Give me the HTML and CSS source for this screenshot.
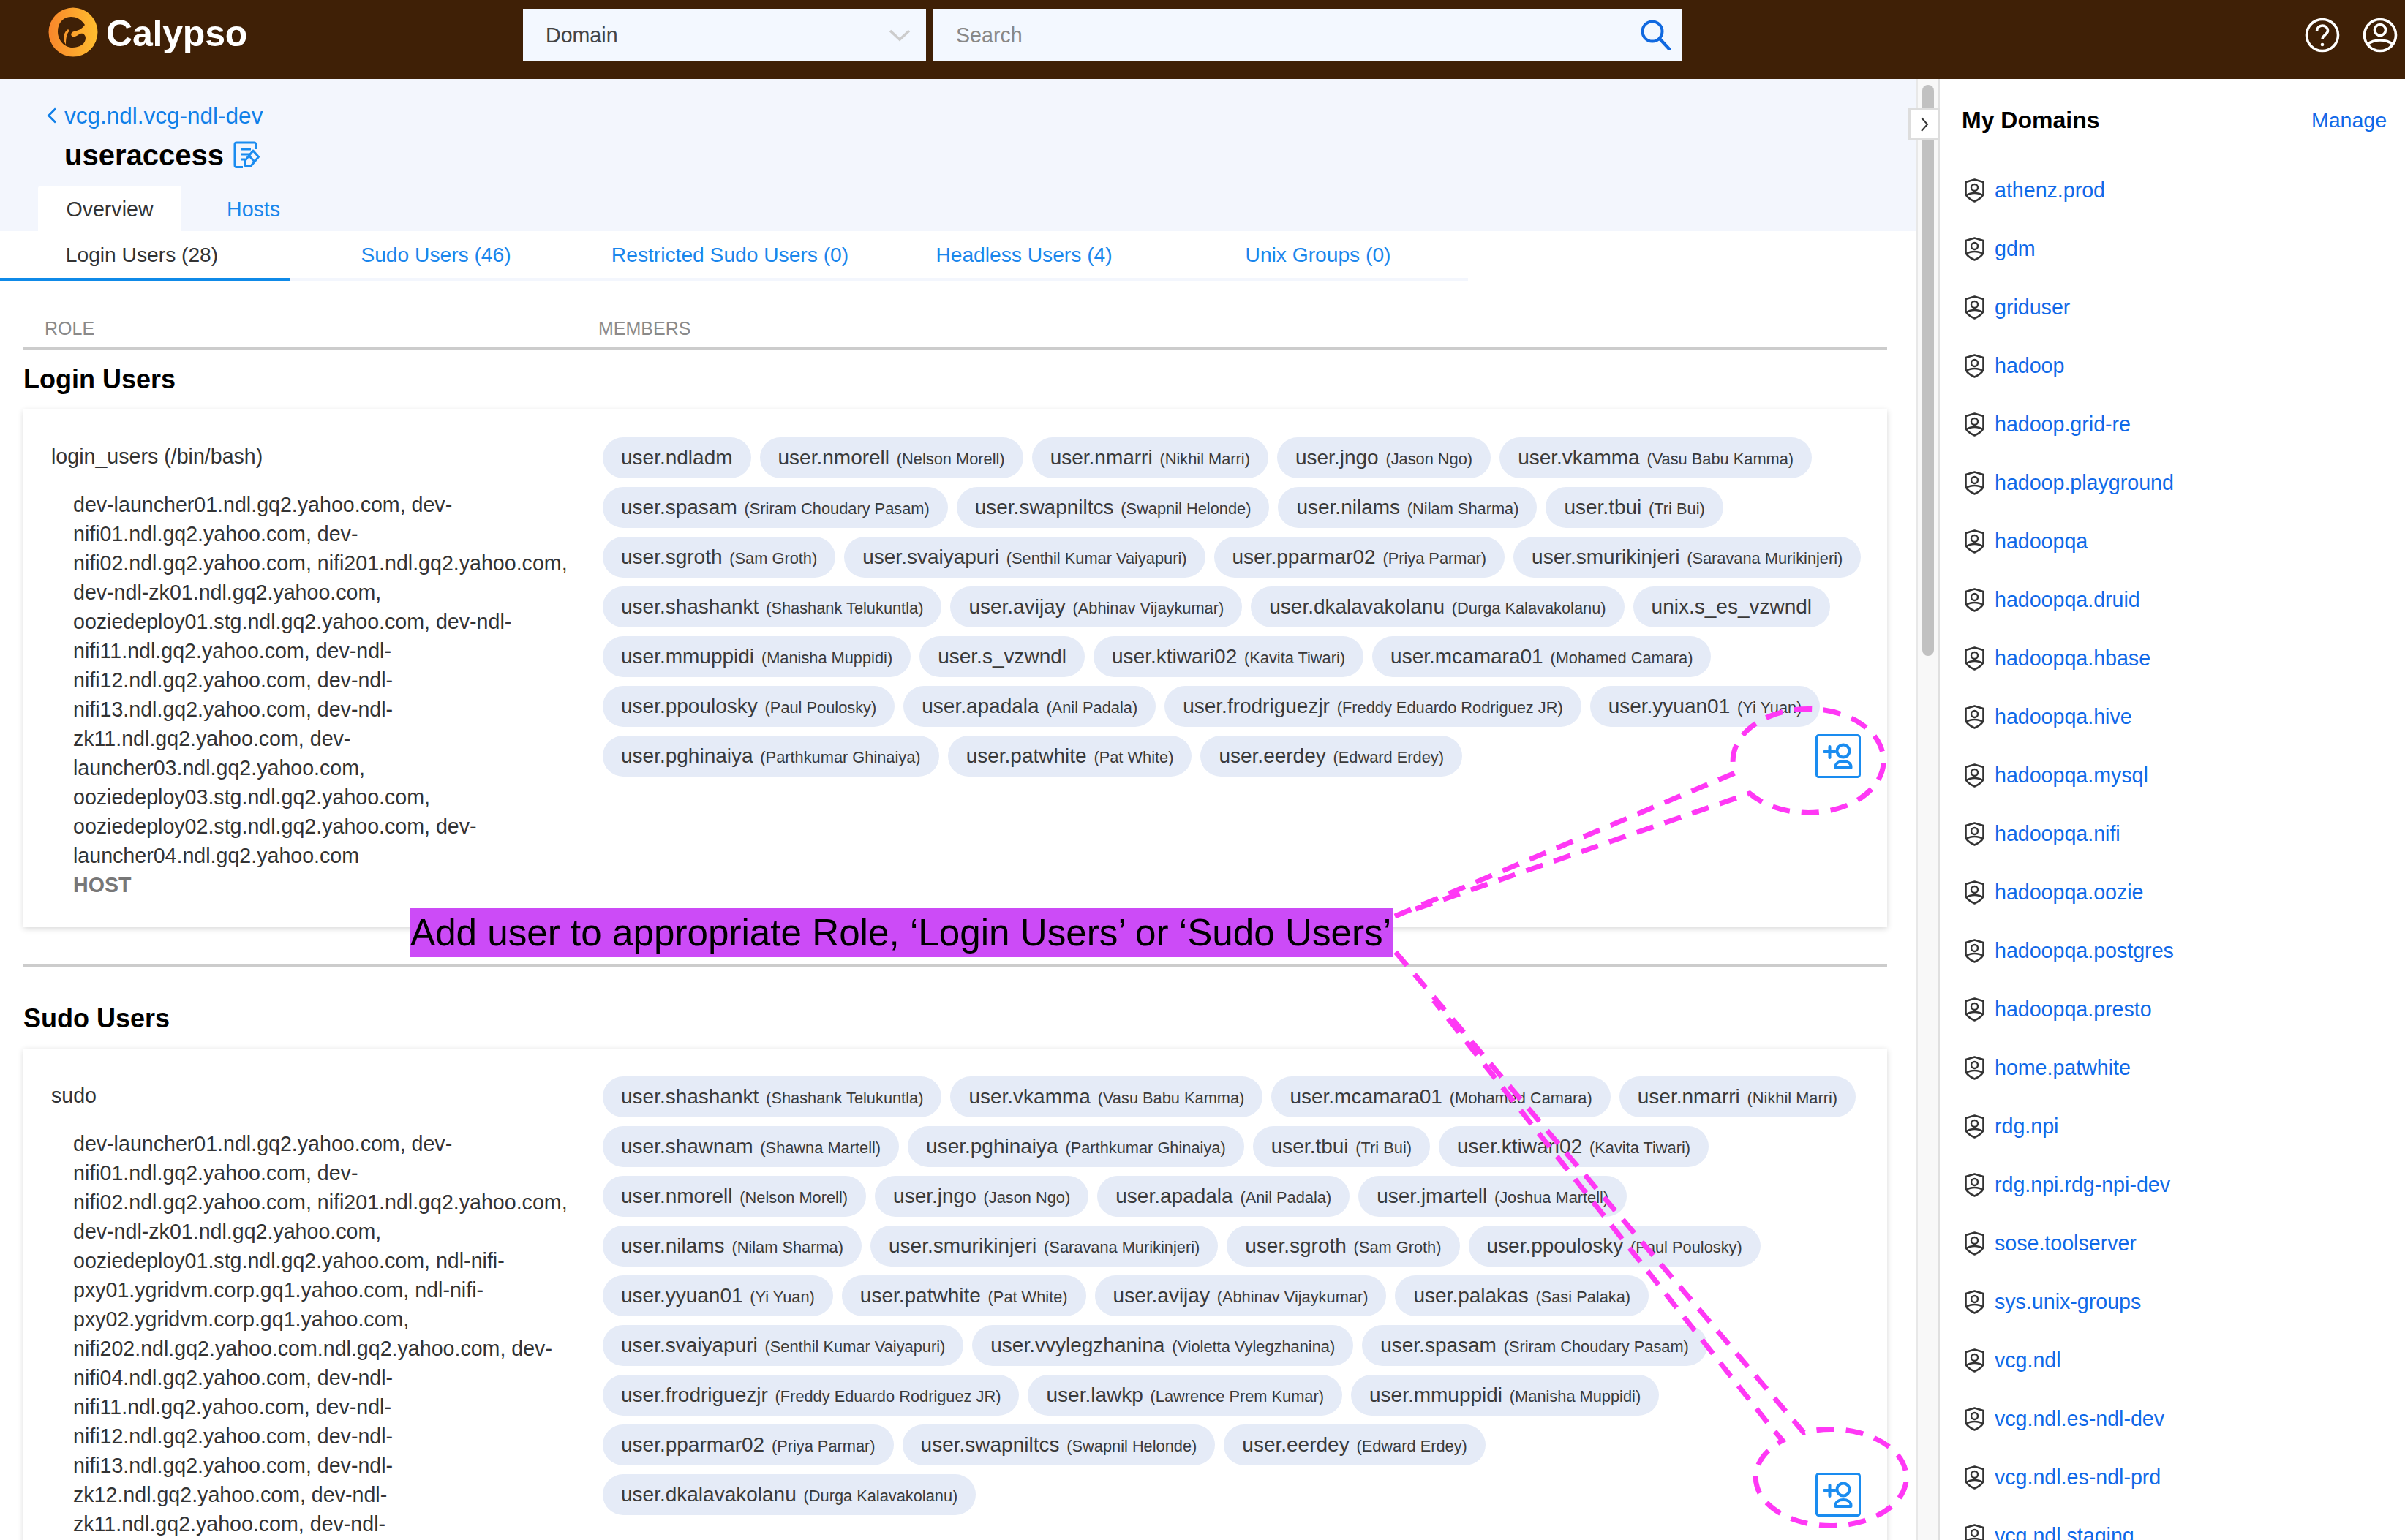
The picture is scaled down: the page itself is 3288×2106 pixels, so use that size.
FILE: index.html
```html
<!DOCTYPE html>
<html lang="en">
<head>
    <meta charset="UTF-8">
    <title>Calypso - useraccess</title>
    <link rel="stylesheet" href="styles.css">
</head>
<body>

<svg width="0" height="0" class="icon-defs">
    <symbol id="add-user" viewBox="0 0 62 60">
        <rect x="1.5" y="1.5" width="59" height="57" rx="3" fill="none" stroke="currentColor" stroke-width="3"/>
        <path d="M12 24h15M19.500 17v15" fill="none" stroke="currentColor" stroke-width="4" stroke-linecap="round"/>
        <circle cx="38" cy="23" r="8.500" fill="none" stroke="currentColor" stroke-width="4"/>
        <path d="M27.500 44.500c0-5 5-7.500 10.500-7.500s10.500 2.500 10.500 7.500v1.500h-21z" fill="none" stroke="currentColor" stroke-width="4" stroke-linejoin="round"/>
    </symbol>
    <symbol id="shield" viewBox="0 0 27 33">
        <path d="M13.500 1.500 25.500 5v16c0 3-6 8-12 10.500C7.500 29 1.500 24 1.500 21V5z" fill="none" stroke="#333" stroke-width="2.600" stroke-linejoin="round"/>
        <circle cx="13.500" cy="12.500" r="4.500" fill="none" stroke="#333" stroke-width="2.400"/>
        <path d="M2.500 23c6-4 16-4 22 0" fill="none" stroke="#333" stroke-width="2.400"/>
    </symbol>
</svg>

<header class="topbar">
    <div class="logo">
        <svg class="logo-mark" viewBox="0 0 68 68">
            <defs>
                <linearGradient id="logo-fill" x1="0" y1="0" x2="1" y2="0">
                    <stop offset="0" stop-color="#f8862b"/>
                    <stop offset="1" stop-color="#ffbe2f"/>
                </linearGradient>
            </defs>
            <circle cx="34" cy="34" r="33.500" fill="url(#logo-fill)"/>
            <path d="M50 24C45 16 38 13 31 13 20 13 13 22 13 33c0 12 9 22 20 22 10 0 18-5 18-13 0-5-5-8-9-5-3 2-6 4-9 3-3-2-2-6 2-7 5-1 11-3 15-9z" fill="#3f2006"/>
            <path d="M27 30c-6 4-8 13-3 21 0-8 1-15 5-19z" fill="#f99a2c"/>
        </svg>
        <span class="logo-text">Calypso</span>
    </div>
    <div class="domain-select">
        <span>Domain</span>
        <svg class="select-caret" viewBox="0 0 30 18"><path d="M2 3l13 12L28 3" fill="none" stroke="#ccc" stroke-width="3.500"/></svg>
    </div>
    <div class="search-box">
        <span>Search</span>
        <svg class="search-icon" viewBox="0 0 42 42"><circle cx="16" cy="16" r="13.500" fill="none" stroke="#1069e0" stroke-width="4"/><path d="M26 26l14 15" stroke="#1069e0" stroke-width="4.500" stroke-linecap="round"/></svg>
    </div>
    <div class="user-icons">
        <svg class="round-icon" viewBox="0 0 48 48">
            <circle cx="24" cy="24" r="21.500" fill="none" stroke="#fff" stroke-width="3.600"/>
            <path d="M16.500 18.500c0-4.500 3.500-7.500 7.500-7.500s7.500 3 7.500 7c0 5-7.500 6-7.500 12" fill="none" stroke="#fff" stroke-width="3.600"/>
            <circle cx="24" cy="37" r="2.300" fill="#fff"/>
        </svg>
        <svg class="round-icon" viewBox="0 0 48 48">
            <circle cx="24" cy="24" r="21.500" fill="none" stroke="#fff" stroke-width="3.600"/>
            <circle cx="24" cy="17" r="7.500" fill="none" stroke="#fff" stroke-width="3.600"/>
            <path d="M6 37c10-8 26-8 36 0" fill="none" stroke="#fff" stroke-width="3.600"/>
        </svg>
    </div>
</header>

<div class="workspace">
    <main class="content">
        <div class="page-head">
            <a class="crumb">
                <svg class="crumb-arrow" viewBox="0 0 14 22"><path d="M12 1.500L2.500 11l9.500 9.500" fill="none" stroke="#0f7fe8" stroke-width="2.800"/></svg>
                vcg.ndl.vcg-ndl-dev
            </a>
            <h1 class="service-title">
                useraccess
                <svg class="title-icon" viewBox="0 0 36 38">
                    <path d="M13 35.500H4.500a2.500 2.500 0 0 1-2.500-2.500V4.500A2.500 2.500 0 0 1 4.500 2h24A2.500 2.500 0 0 1 31 4.500V11" fill="none" stroke="#1a8cf0" stroke-width="3"/>
                    <path d="M10 11h14M10 18h14M10 25h6" fill="none" stroke="#1a8cf0" stroke-width="3"/>
                    <path d="M27 13l7.500 8.500L24 34H16.500v-8z M21 19.500l7.500 8" fill="none" stroke="#1a8cf0" stroke-width="3" stroke-linejoin="round"/>
                </svg>
            </h1>
            <div class="page-tabs">
                <a class="page-tab active">Overview</a>
                <a class="page-tab">Hosts</a>
            </div>
        </div>

        <nav class="user-tabs">
            <a class="user-tab active">Login Users (28)</a>
            <a class="user-tab">Sudo Users (46)</a>
            <a class="user-tab">Restricted Sudo Users (0)</a>
            <a class="user-tab">Headless Users (4)</a>
            <a class="user-tab">Unix Groups (0)</a>
        </nav>

        <div class="table-area">
            <div class="table-head">
                <span class="col-role">ROLE</span>
                <span>MEMBERS</span>
            </div>

            <h3 class="section-title">Login Users</h3>
            <section class="role-card">
                <div class="role-col">
                    <div class="role-name">login_users (/bin/bash)</div>
                    <div class="host-list">dev-launcher01.ndl.gq2.yahoo.com, dev-nifi01.ndl.gq2.yahoo.com, dev-nifi02.ndl.gq2.yahoo.com, nifi201.ndl.gq2.yahoo.com, dev-ndl-zk01.ndl.gq2.yahoo.com, ooziedeploy01.stg.ndl.gq2.yahoo.com, dev-ndl-nifi11.ndl.gq2.yahoo.com, dev-ndl-nifi12.ndl.gq2.yahoo.com, dev-ndl-nifi13.ndl.gq2.yahoo.com, dev-ndl-zk11.ndl.gq2.yahoo.com, dev-launcher03.ndl.gq2.yahoo.com, ooziedeploy03.stg.ndl.gq2.yahoo.com, ooziedeploy02.stg.ndl.gq2.yahoo.com, dev-launcher04.ndl.gq2.yahoo.com</div>
                    <div class="host-label">HOST</div>
                </div>
                <div class="chips">
                    <span class="chip">user.ndladm</span>
                    <span class="chip">user.nmorell <small>(Nelson Morell)</small></span>
                    <span class="chip">user.nmarri <small>(Nikhil Marri)</small></span>
                    <span class="chip">user.jngo <small>(Jason Ngo)</small></span>
                    <span class="chip">user.vkamma <small>(Vasu Babu Kamma)</small></span>
                    <span class="chip">user.spasam <small>(Sriram Choudary Pasam)</small></span>
                    <span class="chip">user.swapniltcs <small>(Swapnil Helonde)</small></span>
                    <span class="chip">user.nilams <small>(Nilam Sharma)</small></span>
                    <span class="chip">user.tbui <small>(Tri Bui)</small></span>
                    <span class="chip">user.sgroth <small>(Sam Groth)</small></span>
                    <span class="chip">user.svaiyapuri <small>(Senthil Kumar Vaiyapuri)</small></span>
                    <span class="chip">user.pparmar02 <small>(Priya Parmar)</small></span>
                    <span class="chip">user.smurikinjeri <small>(Saravana Murikinjeri)</small></span>
                    <span class="chip">user.shashankt <small>(Shashank Telukuntla)</small></span>
                    <span class="chip">user.avijay <small>(Abhinav Vijaykumar)</small></span>
                    <span class="chip">user.dkalavakolanu <small>(Durga Kalavakolanu)</small></span>
                    <span class="chip">unix.s_es_vzwndl</span>
                    <span class="chip">user.mmuppidi <small>(Manisha Muppidi)</small></span>
                    <span class="chip">user.s_vzwndl</span>
                    <span class="chip">user.ktiwari02 <small>(Kavita Tiwari)</small></span>
                    <span class="chip">user.mcamara01 <small>(Mohamed Camara)</small></span>
                    <span class="chip">user.ppoulosky <small>(Paul Poulosky)</small></span>
                    <span class="chip">user.apadala <small>(Anil Padala)</small></span>
                    <span class="chip">user.frodriguezjr <small>(Freddy Eduardo Rodriguez JR)</small></span>
                    <span class="chip">user.yyuan01 <small>(Yi Yuan)</small></span>
                    <span class="chip">user.pghinaiya <small>(Parthkumar Ghinaiya)</small></span>
                    <span class="chip">user.patwhite <small>(Pat White)</small></span>
                    <span class="chip">user.eerdey <small>(Edward Erdey)</small></span>
                    <svg class="add-btn"><use href="#add-user"/></svg>
                </div>
            </section>

            <div class="divider"></div>

            <h3 class="section-title sudo-title">Sudo Users</h3>
            <section class="role-card">
                <div class="role-col">
                    <div class="role-name">sudo</div>
                    <div class="host-list">dev-launcher01.ndl.gq2.yahoo.com, dev-nifi01.ndl.gq2.yahoo.com, dev-nifi02.ndl.gq2.yahoo.com, nifi201.ndl.gq2.yahoo.com, dev-ndl-zk01.ndl.gq2.yahoo.com, ooziedeploy01.stg.ndl.gq2.yahoo.com, ndl-nifi-pxy01.ygridvm.corp.gq1.yahoo.com, ndl-nifi-pxy02.ygridvm.corp.gq1.yahoo.com, nifi202.ndl.gq2.yahoo.com.ndl.gq2.yahoo.com, dev-nifi04.ndl.gq2.yahoo.com, dev-ndl-nifi11.ndl.gq2.yahoo.com, dev-ndl-nifi12.ndl.gq2.yahoo.com, dev-ndl-nifi13.ndl.gq2.yahoo.com, dev-ndl-zk12.ndl.gq2.yahoo.com, dev-ndl-zk11.ndl.gq2.yahoo.com, dev-ndl-</div>
                </div>
                <div class="chips">
                    <span class="chip">user.shashankt <small>(Shashank Telukuntla)</small></span>
                    <span class="chip">user.vkamma <small>(Vasu Babu Kamma)</small></span>
                    <span class="chip">user.mcamara01 <small>(Mohamed Camara)</small></span>
                    <span class="chip">user.nmarri <small>(Nikhil Marri)</small></span>
                    <span class="chip">user.shawnam <small>(Shawna Martell)</small></span>
                    <span class="chip">user.pghinaiya <small>(Parthkumar Ghinaiya)</small></span>
                    <span class="chip">user.tbui <small>(Tri Bui)</small></span>
                    <span class="chip">user.ktiwari02 <small>(Kavita Tiwari)</small></span>
                    <span class="chip">user.nmorell <small>(Nelson Morell)</small></span>
                    <span class="chip">user.jngo <small>(Jason Ngo)</small></span>
                    <span class="chip">user.apadala <small>(Anil Padala)</small></span>
                    <span class="chip">user.jmartell <small>(Joshua Martell)</small></span>
                    <span class="chip">user.nilams <small>(Nilam Sharma)</small></span>
                    <span class="chip">user.smurikinjeri <small>(Saravana Murikinjeri)</small></span>
                    <span class="chip">user.sgroth <small>(Sam Groth)</small></span>
                    <span class="chip">user.ppoulosky <small>(Paul Poulosky)</small></span>
                    <span class="chip">user.yyuan01 <small>(Yi Yuan)</small></span>
                    <span class="chip">user.patwhite <small>(Pat White)</small></span>
                    <span class="chip">user.avijay <small>(Abhinav Vijaykumar)</small></span>
                    <span class="chip">user.palakas <small>(Sasi Palaka)</small></span>
                    <span class="chip">user.svaiyapuri <small>(Senthil Kumar Vaiyapuri)</small></span>
                    <span class="chip">user.vvylegzhanina <small>(Violetta Vylegzhanina)</small></span>
                    <span class="chip">user.spasam <small>(Sriram Choudary Pasam)</small></span>
                    <span class="chip">user.frodriguezjr <small>(Freddy Eduardo Rodriguez JR)</small></span>
                    <span class="chip">user.lawkp <small>(Lawrence Prem Kumar)</small></span>
                    <span class="chip">user.mmuppidi <small>(Manisha Muppidi)</small></span>
                    <span class="chip">user.pparmar02 <small>(Priya Parmar)</small></span>
                    <span class="chip">user.swapniltcs <small>(Swapnil Helonde)</small></span>
                    <span class="chip">user.eerdey <small>(Edward Erdey)</small></span>
                    <span class="chip">user.dkalavakolanu <small>(Durga Kalavakolanu)</small></span>
                    <svg class="add-btn"><use href="#add-user"/></svg>
                </div>
            </section>
        </div>
    </main>

    <div class="scroll-track"><div class="scroll-thumb"></div></div>
    <button class="collapse-btn">
        <svg viewBox="0 0 14 24"><path d="M3 3l8 9-8 9" fill="none" stroke="#333" stroke-width="2"/></svg>
    </button>

    <aside class="domains">
        <div class="domains-head">
            <h2>My Domains</h2>
            <a class="manage">Manage</a>
        </div>
        <ul class="domain-list">
            <li><svg class="shield"><use href="#shield"/></svg><a>athenz.prod</a></li>
            <li><svg class="shield"><use href="#shield"/></svg><a>gdm</a></li>
            <li><svg class="shield"><use href="#shield"/></svg><a>griduser</a></li>
            <li><svg class="shield"><use href="#shield"/></svg><a>hadoop</a></li>
            <li><svg class="shield"><use href="#shield"/></svg><a>hadoop.grid-re</a></li>
            <li><svg class="shield"><use href="#shield"/></svg><a>hadoop.playground</a></li>
            <li><svg class="shield"><use href="#shield"/></svg><a>hadoopqa</a></li>
            <li><svg class="shield"><use href="#shield"/></svg><a>hadoopqa.druid</a></li>
            <li><svg class="shield"><use href="#shield"/></svg><a>hadoopqa.hbase</a></li>
            <li><svg class="shield"><use href="#shield"/></svg><a>hadoopqa.hive</a></li>
            <li><svg class="shield"><use href="#shield"/></svg><a>hadoopqa.mysql</a></li>
            <li><svg class="shield"><use href="#shield"/></svg><a>hadoopqa.nifi</a></li>
            <li><svg class="shield"><use href="#shield"/></svg><a>hadoopqa.oozie</a></li>
            <li><svg class="shield"><use href="#shield"/></svg><a>hadoopqa.postgres</a></li>
            <li><svg class="shield"><use href="#shield"/></svg><a>hadoopqa.presto</a></li>
            <li><svg class="shield"><use href="#shield"/></svg><a>home.patwhite</a></li>
            <li><svg class="shield"><use href="#shield"/></svg><a>rdg.npi</a></li>
            <li><svg class="shield"><use href="#shield"/></svg><a>rdg.npi.rdg-npi-dev</a></li>
            <li><svg class="shield"><use href="#shield"/></svg><a>sose.toolserver</a></li>
            <li><svg class="shield"><use href="#shield"/></svg><a>sys.unix-groups</a></li>
            <li><svg class="shield"><use href="#shield"/></svg><a>vcg.ndl</a></li>
            <li><svg class="shield"><use href="#shield"/></svg><a>vcg.ndl.es-ndl-dev</a></li>
            <li><svg class="shield"><use href="#shield"/></svg><a>vcg.ndl.es-ndl-prd</a></li>
            <li><svg class="shield"><use href="#shield"/></svg><a>vcg.ndl.staging</a></li>
        </ul>
    </aside>
</div>

<!-- annotation drawn on top of the screenshot -->
<svg class="callouts" viewBox="0 0 3288 2106">
    <path d="M1907 1253L2372 1057A103 71 0 1 1 2392 1085L1930 1245"/>
    <path d="M1908 1302L2466 1959A103 66 0 1 1 2437 1970L2420 1950L1960 1368"/>
</svg>
<div class="callout-label">Add user to appropriate Role, ‘Login Users’ or ‘Sudo Users’</div>

</body>
</html>
```

FILE: styles.css
```css
* {
    box-sizing: border-box;
}

html, body {
    margin: 0;
    padding: 0;
    height: 2106px;
    overflow: hidden;
}

body {
    position: relative;
    display: flex;
    flex-direction: column;
    font-family: "Liberation Sans", Arial, sans-serif;
    font-size: 28.6px;
    color: #333;
    background-color: #fff;
}

.icon-defs {
    position: absolute;
}

/* top bar */
.topbar {
    display: flex;
    align-items: flex-start;
    flex: 0 0 108px;
    height: 108px;
    background-color: #3f2006;
}

.logo {
    display: flex;
    align-items: center;
    width: 715px;
    height: 88px;
    padding-left: 66px;
}

.logo-mark {
    width: 68px;
    height: 68px;
}

.logo-text {
    margin-left: 11px;
    padding-top: 3px;
    font-size: 50px;
    font-weight: bold;
    color: #fff;
    letter-spacing: -0.2px;
}

.domain-select, .search-box {
    display: flex;
    align-items: center;
    justify-content: space-between;
    height: 72px;
    margin-top: 12px;
    background-color: #f3f8ff;
    color: #444;
}

.domain-select {
    width: 551px;
    padding: 0 21px 0 31px;
    margin-right: 10px;
}

.select-caret {
    width: 30px;
    height: 18px;
}

.search-box {
    width: 1024px;
    padding: 0 15px 0 31px;
    color: #888;
}

.search-icon {
    width: 42px;
    height: 42px;
}

.user-icons {
    display: flex;
    gap: 31px;
    margin-left: auto;
    margin-top: 24px;
    padding-right: 10px;
}

.round-icon {
    width: 48px;
    height: 48px;
}

/* main column */
.workspace {
    position: relative;
    display: flex;
    flex: 1;
    min-height: 0;
}

.content {
    flex: 0 0 2620px;
    overflow: hidden;
}

.page-head {
    height: 208px;
    padding-top: 33px;
    background-color: #f3f6fd;
}

.crumb {
    display: flex;
    align-items: center;
    height: 34px;
    padding-left: 64px;
    font-size: 31.5px;
    color: #0f7fe8;
}

.crumb-arrow {
    width: 14px;
    height: 22px;
    margin-right: 10px;
}

.service-title {
    display: flex;
    align-items: center;
    height: 44px;
    margin: 15px 0 0;
    padding-left: 88px;
    font-size: 40px;
    font-weight: bold;
    color: #000;
}

.title-icon {
    width: 36px;
    height: 38px;
    margin-left: 13px;
}

.page-tabs {
    display: flex;
    margin-top: 20px;
    padding-left: 52px;
}

.page-tab {
    width: 196px;
    height: 62px;
    line-height: 65px;
    text-align: center;
    color: #1a86ec;
    border-radius: 4px 4px 0 0;
}

.page-tab.active {
    background-color: #fff;
    color: #333;
}

.page-tab:last-child {
    width: auto;
    padding-left: 62px;
}

.user-tabs {
    display: flex;
    gap: 6px;
    width: 2007px;
    height: 68px;
    border-bottom: 4px solid #f3f6fd;
}

.user-tab {
    flex: 0 0 396px;
    height: 68px;
    padding-right: 8px;
    line-height: 65px;
    text-align: center;
    font-size: 28.2px;
    color: #1a86ec;
}

.user-tab.active {
    border-bottom: 4px solid #0f8ae8;
    color: #333;
}

.table-area {
    padding: 0 40px 0 32px;
}

.table-head {
    display: flex;
    height: 48px;
    margin-top: 46px;
    line-height: 38px;
    font-size: 25px;
    color: #8a8a8a;
    border-bottom: 4px solid #ccc;
}

.col-role {
    width: 786px;
    padding-left: 29px;
}

.section-title {
    height: 82px;
    margin: 0;
    line-height: 82px;
    font-size: 36px;
    font-weight: bold;
    color: #000;
}

.sudo-title {
    height: 112px;
    padding-top: 30px;
}

.role-card {
    display: flex;
    padding: 38px 0 38px 38px;
    background-color: #fff;
    box-shadow: 0 2px 8px rgba(0, 0, 0, 0.16);
}

.role-col {
    flex: 0 0 754px;
}

.role-name {
    height: 32px;
    margin-top: 10px;
    line-height: 32px;
}

.host-list {
    width: 720px;
    margin-top: 30px;
    padding-left: 30px;
    line-height: 40px;
}

.host-label {
    height: 40px;
    padding-left: 30px;
    line-height: 40px;
    font-weight: bold;
    color: #777;
}

.chips {
    display: flex;
    flex-wrap: wrap;
    align-items: center;
    align-content: flex-start;
    gap: 12px 12px;
    flex: 1;
    padding-right: 34px;
}

.chip {
    height: 56px;
    padding: 0 25px;
    line-height: 55px;
    font-size: 28px;
    background-color: #e5ebf7;
    border-radius: 28px;
    white-space: nowrap;
    color: #3a3a3a;
}

.chip small {
    margin-left: 2px;
    font-size: 21.8px;
}

.add-btn {
    width: 62px;
    height: 60px;
    margin: -2px 2px -2px auto;
    color: #1a8cf0;
}

.divider {
    height: 4px;
    margin-top: 50px;
    background-color: #ccc;
}

/* scrollbar and collapse handle */
.scroll-track {
    display: flex;
    justify-content: center;
    flex: 0 0 32px;
    padding-top: 8px;
    background-color: #f8f8f8;
    border-left: 2px solid #e8e8e8;
    border-right: 2px solid #e0e0e0;
}

.scroll-thumb {
    width: 16px;
    height: 781px;
    background-color: #c1c1c1;
    border-radius: 8px;
}

.collapse-btn {
    position: absolute;
    top: 40px;
    left: 2609px;
    width: 43px;
    height: 44px;
    padding: 0;
    background-color: #fff;
    border: 3px solid #ddd;
}

.collapse-btn svg {
    display: block;
    width: 14px;
    height: 24px;
    margin: 0 auto;
}

/* right panel */
.domains {
    flex: 1;
    overflow: hidden;
    padding: 36px 25px 0 30px;
}

.domains-head {
    display: flex;
    align-items: center;
    justify-content: space-between;
    height: 40px;
}

.domains-head h2 {
    margin: 0;
    font-size: 32px;
    font-weight: bold;
    color: #000;
}

.manage {
    font-size: 28.5px;
    color: #1069e8;
}

.domain-list {
    margin: 36px 0 0;
    padding: 0 0 0 4px;
    list-style: none;
}

.domain-list li {
    display: flex;
    align-items: center;
    gap: 14px;
    height: 80px;
    color: #1069e8;
}

.shield {
    width: 27px;
    height: 33px;
}

/* pink annotation */
.callouts {
    position: absolute;
    top: 0;
    left: 0;
    width: 3288px;
    height: 2106px;
    fill: none;
    stroke: #ff38f5;
    stroke-width: 7;
    stroke-dasharray: 24 16;
    pointer-events: none;
}

.callout-label {
    position: absolute;
    top: 1242px;
    left: 561px;
    width: 1343px;
    height: 67px;
    line-height: 68px;
    white-space: nowrap;
    font-size: 51.2px;
    color: #000;
    background-color: #cc4bf7;
}
```
